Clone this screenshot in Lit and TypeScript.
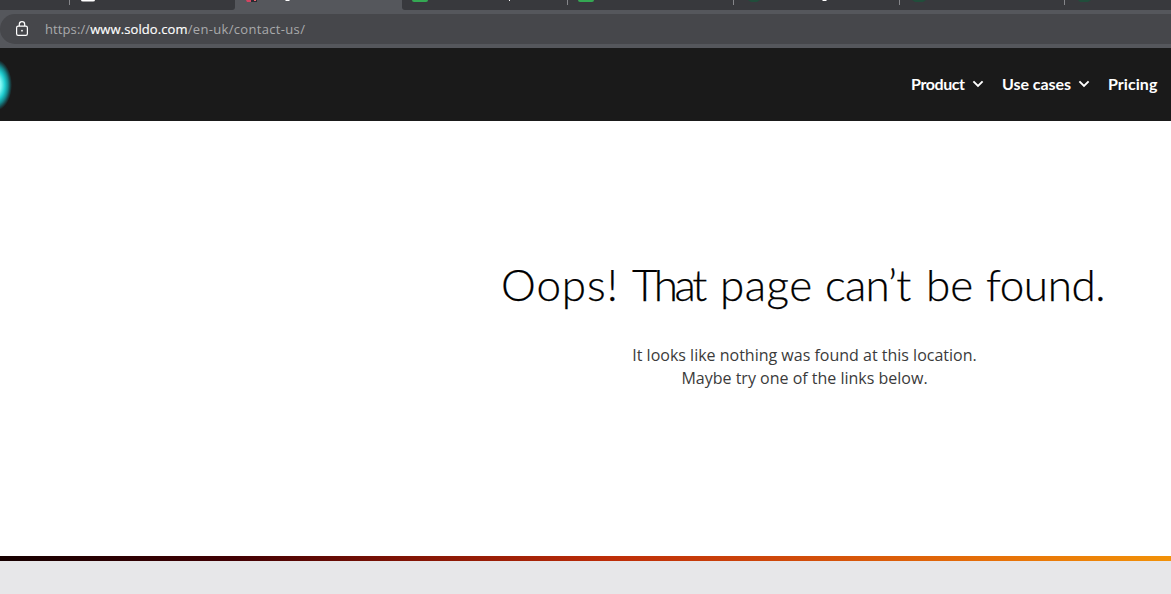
import { LitElement, html, css } from "lit";
import { customElement } from "lit/decorators.js";

const chevron = html`<svg class="chevron" viewBox="0 0 12 8" width="12" height="8">
  <path d="M1.4 1.3 6 5.9l4.6-4.6" fill="none" stroke="currentColor" stroke-width="1.9" />
</svg>`;

@customElement("app-root")
export class AppRoot extends LitElement {
  static styles = css`
    :host { display: flex; flex-direction: column; width: 100%; height: 594px; overflow: hidden; background: #fff; }
    .browser { background: #55575c; height: 48px; flex: none; display: flex; flex-direction: column; gap: 4px; }
    .tabs { display: grid; grid-template-columns: 70px 165px 167px 166px 166px 166px 165px 1fr; height: 10px; background: #55575c; }
    .tab { background: #38393d; height: 10px; box-sizing: border-box; overflow: hidden; }
    .tab svg { display: block; }
    .tab.active { background: #55575c; }
    .tab.before { border-bottom-right-radius: 3px; }
    .tab.after { border-bottom-left-radius: 3px; }
    .address { height: 30px; background: #46474b; border-radius: 15px 0 0 15px; display: flex; align-items: center; padding-left: 15px; }
    .lock { margin-right: 16px; flex: none; }
    .url { font: 13px/20px "Open Sans", sans-serif; color: #a9aaac; white-space: nowrap; letter-spacing: 0.1px; }
    .url b { font-weight: 400; color: #fff; -webkit-text-stroke: 0.15px #fff; }
    .url .path { letter-spacing: 0.33px; }
    .header { background: #1a1a1a; height: 73px; flex: none; display: flex; justify-content: space-between; align-items: center; overflow: hidden; }
    .glow { width: 20px; height: 73px; }
    .nav { display: flex; align-items: center; padding: 0 13px 2px 0; color: #fff; font: 700 16px/24px Lato, sans-serif; white-space: nowrap; }
    .item { display: flex; align-items: center; }
    .product { width: 91px; letter-spacing: -0.4px; }
    .cases { width: 106px; letter-spacing: -0.06px; }
    .pricing { width: 50px; letter-spacing: 0.05px; }
    .item .label { flex: 1; }
    .chevron { margin-right: 18px; flex: none; }
    .main { height: 435px; flex: none; padding: 133px 0 0 438px; box-sizing: border-box; text-align: center; }
    h1 { margin: 0; padding-left: 63px; display: grid; grid-template-columns: 131px 88px 105px 101px 60px 1fr; text-align: left; font: 300 44px/60px Lato, sans-serif; color: #000; white-space: nowrap; -webkit-text-stroke: 0.25px #000; }
    .oops { letter-spacing: 0.9px; }
    .that { letter-spacing: -3.4px; }
    .page { letter-spacing: 0.5px; }
    .cant { letter-spacing: -0.8px; }
    .found { letter-spacing: -0.4px; }
    p { margin: 30px 0 0; font: 16px/23px "Open Sans", sans-serif; color: #3b3b3b; white-space: nowrap; }
    .rule { height: 5px; flex: none; background: linear-gradient(90deg, #160000 0%, #420003 20%, #821405 35%, #bd2d08 52%, #ce470a 66%, #e67008 85%, #f29208 100%); }
    .footer { flex: 1; background: #e7e7e9; }
  `;

  render() {
    return html`
      <div class="browser">
        <div class="tabs">
          <div class="tab"><svg width="70" height="10"><path d="M69.5 0v5" stroke="#85868a" /></svg></div>
          <div class="tab before"><svg width="165" height="10"><path d="M11 0h14q0 1.5-2 1.5H13Q11 1.5 11 0Z" fill="#fff" /></svg></div>
          <div class="tab active"><svg width="167" height="10"><path d="M11 0h9v2h-8Z" fill="#d34461" /><path d="M16 0h6v2h-6Z" fill="#292b31" /><path d="M19 0h2v1h-2Z" fill="#ef6370" /><path d="M50 0h5l-1 1h-3Z" fill="#fff" /></svg></div>
          <div class="tab after"><svg width="166" height="10"><path d="M10 0h16q0 2-2 2H12q-2 0-2-2Z" fill="#34a853" /><path d="M107 0h1v1h-1Z" fill="#fff" /><path d="M165.5 0v5" stroke="#85868a" /></svg></div>
          <div class="tab"><svg width="166" height="10"><path d="M10 0h16q0 2-2 2H12q-2 0-2-2Z" fill="#34a853" /><path d="M165.5 0v5" stroke="#85868a" /></svg></div>
          <div class="tab"><svg width="166" height="10"><path d="M14 0h12l-3 2h-6Z" fill="#214d3b" /><path d="M88 0h5l-1 1h-3Z" fill="#fff" /><path d="M165.5 0v5" stroke="#85868a" /></svg></div>
          <div class="tab"><svg width="165" height="10"><path d="M12 0h14l-3 2h-8Z" fill="#214d3b" /><path d="M164.5 0v5" stroke="#85868a" /></svg></div>
          <div class="tab"><svg width="106" height="10"><path d="M13 0h13l-3 2h-8Z" fill="#214d3b" /></svg></div>
        </div>
        <div class="address">
          <svg class="lock" width="14" height="16" viewBox="0 0 14 16" fill="none" stroke="#fff" stroke-width="1.2">
            <rect x="1.6" y="5.1" width="10.8" height="9.3" rx="1.6" />
            <path d="M4.3 5V3.4a2.7 2.7 0 0 1 5.4 0V5" />
            <circle cx="7" cy="9.7" r=".9" fill="#fff" stroke="none" />
          </svg>
          <span class="url">https://<b>www.soldo.com</b><span class="path">/en-uk/contact-us/</span></span>
        </div>
      </div>
      <header class="header">
        <svg class="glow" width="20" height="73" viewBox="0 0 20 73">
          <defs><radialGradient id="glow">
            <stop offset="0" stop-color="#a8fffb" />
            <stop offset=".35" stop-color="#84f7f3" />
            <stop offset=".58" stop-color="#20ced0" />
            <stop offset=".76" stop-color="#148c90" />
            <stop offset=".9" stop-color="#184448" />
            <stop offset="1" stop-color="#1a1a1a" />
          </radialGradient></defs>
          <ellipse cx="-5" cy="37" rx="17" ry="26" fill="url(#glow)" />
        </svg>
        <nav class="nav">
          <span class="item product"><span class="label">Product</span>${chevron}</span>
          <span class="item cases"><span class="label">Use cases</span>${chevron}</span>
          <span class="item pricing">Pricing</span>
        </nav>
      </header>
      <main class="main">
        <h1>
          <span class="oops">Oops! </span><span class="that">That </span><span class="page">page </span><span class="cant">can’t </span><span>be </span><span class="found">found.</span>
        </h1>
        <p>It looks like nothing was found at this location.<br />Maybe try one of the links below.</p>
      </main>
      <div class="rule"></div>
      <footer class="footer"></footer>
    `;
  }
}
